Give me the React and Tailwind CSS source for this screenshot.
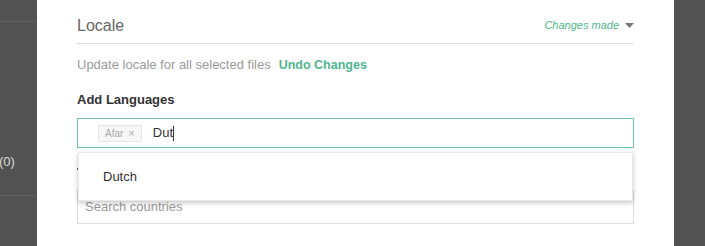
import React from 'react';

const font = { fontFamily: '"Liberation Sans", Arial, sans-serif' };

const App = () => {
  return (
    <div className="flex h-[246px] w-[705px] overflow-hidden bg-[#525252]" style={font}>
      {/* dimmed page behind the modal */}
      <div className="w-[37px] shrink-0 flex flex-col">
        <div className="h-[22px] border-b border-[#606060]" />
        <div className="mt-[132px] text-[13px] leading-[16px] text-[#d8d8d8] -ml-[1px]">(0)</div>
        <div className="mt-[25px] border-b border-[#606060]" />
      </div>

      {/* modal */}
      <div className="w-[637px] shrink-0 bg-white px-[40px]">
        <div className="flex items-center justify-between h-[44px] border-b border-[#dcdcdc] pt-[8px]">
          <span className="text-[16px] text-[#666]">Locale</span>
          <span className="flex items-center gap-[6px] text-[11px] italic text-[#4fb68d]">
            Changes made
            <svg width="9" height="5" viewBox="0 0 9 5"><path d="M0 0h9L4.5 5z" fill="#777" /></svg>
          </span>
        </div>

        <div className="mt-[13px] flex items-center gap-[8px] leading-[16px]">
          <span className="text-[13px] text-[#999]">Update locale for all selected files</span>
          <span className="text-[12.5px] font-bold text-[#4fb68d]">Undo Changes</span>
        </div>

        <div className="mt-[19px] text-[13px] font-bold text-[#333] leading-[16px]">Add Languages</div>

        <div className="relative mt-[10px]">
          <div className="flex items-center gap-[11px] h-[30px] border border-[#6dc4a2] pl-[20px]">
            <span className="flex items-center gap-[5px] h-[17px] px-[6px] bg-[#f6f6f6] border border-[#e6e6e6] text-[10px] text-[#aaa]">
              Afar <span className="text-[11px]">×</span>
            </span>
            <span className="text-[13px] text-[#333]">Dut<span className="inline-block w-[1px] h-[15px] bg-[#333] align-middle" /></span>
          </div>

          {/* countries label sits under the menu; only its edge peeks out */}
          <div className="mt-[14px] h-[14px] flex items-center">
            <span className="w-[2px] h-[2px] bg-[#555]" />
          </div>
          <div className="mt-[14px] h-[34px] border border-[#dcdcdc] flex items-center px-[7px] text-[13px] text-[#999]">
            Search countries
          </div>

          {/* suggestion menu */}
          <div className="absolute left-[1px] right-[1px] top-[34px] h-[49px] bg-white flex items-center pl-[24px] text-[13px] text-[#333] shadow-[0_2px_5px_rgba(0,0,0,0.22)] border border-[#e8e8e8]">
            Dutch
          </div>
        </div>
      </div>

      <div className="flex-1" />
    </div>
  );
};

export default App;
